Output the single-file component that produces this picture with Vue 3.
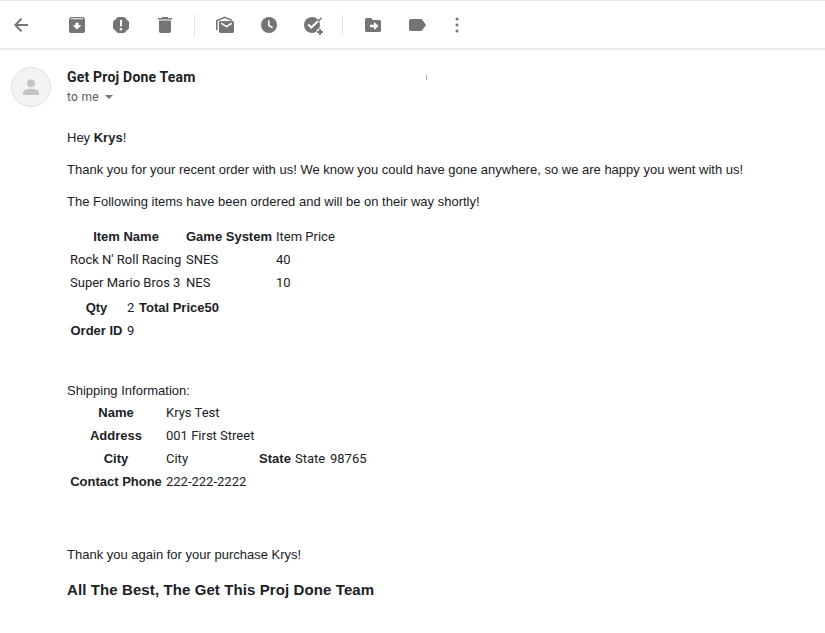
<script setup>
const items = [
  { name: "Rock N' Roll Racing", system: 'SNES', price: 40 },
  { name: 'Super Mario Bros 3', system: 'NES', price: 10 },
]
</script>

<template>
  <div class="mail">
    <header class="toolbar">
      <svg class="icon" viewBox="0 0 24 24"><path class="line" d="M19 12H6.500M12.400 5.800 6.400 12l6 6.200" /></svg>
      <div class="group first">
        <svg class="icon" viewBox="0 0 24 24"><path fill-rule="evenodd" d="M5.600 4h12.800L20 5.900V18.300a1.700 1.700 0 0 1-1.700 1.700H5.700A1.700 1.700 0 0 1 4 18.300V5.900ZM6 5.300v1h12v-1ZM10.400 9.700v2.600H7.600L12 16.400l4.400-4.100h-2.800V9.700Z" /></svg>
        <svg class="icon" viewBox="0 0 24 24"><path fill-rule="evenodd" d="M8.700 4h6.600L20 8.700v6.600L15.300 20H8.700L4 15.300V8.700ZM11 7v6.200h2V7ZM12 14.900a1.300 1.300 0 1 0 0 2.600 1.300 1.300 0 0 0 0-2.600Z" /></svg>
        <svg class="icon" viewBox="0 0 24 24"><path d="M9 4h6v1h4v1.600H5V5h4ZM6 7.600h12v10.700a1.700 1.700 0 0 1-1.700 1.700H7.700A1.700 1.700 0 0 1 6 18.300Z" /></svg>
      </div>
      <i class="divider"></i>
      <div class="group">
        <svg class="icon" viewBox="0 0 24 24"><rect x="6" y="8" width="15" height="12" rx="1.400" /><path class="white" d="M8.300 10.300 13.500 13.600 18.700 10.300" /><path class="thin" d="M3.800 17V7.700L11.500 4.300 18.800 7.200" /></svg>
        <svg class="icon" viewBox="0 0 24 24"><circle cx="12" cy="12" r="8" /><path class="white" d="M11.800 7.400v5l3.800 2.300" /></svg>
        <svg class="icon" viewBox="0 0 24 24"><circle cx="11" cy="12" r="8" /><path class="white wide" d="M7.300 11.500l3 3L21 4.200" /><path class="thin" d="M16.800 8.500 20.500 4.800" /><circle class="paper" cx="19" cy="19" r="3.600" /><path class="line" d="M19 16v6M16 19h6" /></svg>
      </div>
      <i class="divider"></i>
      <div class="group">
        <svg class="icon" viewBox="0 0 24 24"><path fill-rule="evenodd" d="M5.500 5h4.600l1.700 2h6.700A1.500 1.500 0 0 1 20 8.500v9a1.500 1.500 0 0 1-1.500 1.500h-13A1.500 1.500 0 0 1 4 17.500v-11A1.500 1.500 0 0 1 5.500 5ZM9 11.700v2.600h4v2.700l4.600-4L13 9v2.700Z" /></svg>
        <svg class="icon" viewBox="0 0 24 24"><path d="M5.700 6h10.200c.6 0 1.100.3 1.400.7L21 12l-3.700 5.300c-.3.400-.8.700-1.400.7H5.700A1.700 1.700 0 0 1 4 16.300V7.700A1.700 1.700 0 0 1 5.700 6Z" /></svg>
      </div>
      <svg class="icon more" viewBox="0 0 24 24"><circle cx="12" cy="6" r="1.500" /><circle cx="12" cy="12" r="1.500" /><circle cx="12" cy="18" r="1.500" /></svg>
    </header>

    <article class="message">
      <div class="avatar">
        <svg viewBox="0 0 40 40"><circle cx="20" cy="16.200" r="4" /><path d="M12 28v-2.200c0-2.600 5-4 8-4s8 1.400 8 4V28Z" /></svg>
      </div>
      <div class="content">
        <div class="sender"><span class="from">Get Proj Done Team</span><i class="tick"></i></div>
        <div class="to">to me <i class="caret"></i></div>

        <p class="greeting">Hey <b>Krys</b>!</p>
        <p class="thanks">Thank you for your recent order with us! We know you could have gone anywhere, so we are happy you went with us!</p>
        <p class="following">The Following items have been ordered and will be on their way shortly!</p>

        <div class="grid order">
          <b>Item Name</b><b>Game System</b><span>Item Price</span>
          <template v-for="item in items" :key="item.name">
            <span>{{ item.name }}</span><span>{{ item.system }}</span><span>{{ item.price }}</span>
          </template>
        </div>
        <div class="grid totals">
          <b>Qty</b><span>2</span><b>Total Price50</b>
          <b>Order ID</b><span>9</span>
        </div>

        <p class="shipping-title">Shipping Information:</p>
        <div class="grid shipping">
          <b>Name</b><span class="rest">Krys Test</span>
          <b>Address</b><span class="rest">001 First Street</span>
          <b>City</b><span>City</span><b>State</b><span>State</span><span>98765</span>
          <b>Contact Phone</b><span class="rest">222-222-2222</span>
        </div>

        <p class="again">Thank you again for your purchase Krys!</p>
        <h3>All The Best, The Get This Proj Done Team</h3>
      </div>
    </article>
  </div>
</template>

<style>
body {
  margin: 0;
  background: #fff;
}
</style>

<style scoped>
.mail {
  box-sizing: border-box;
  height: 633px;
  overflow: hidden;
  color: #202124;
  font: 13px/20px "Liberation Sans", Arial, sans-serif;
}
.toolbar {
  display: flex;
  align-items: center;
  box-sizing: border-box;
  height: 50px;
  padding-left: 9px;
  border-top: 1px solid #e6eaed;
  border-bottom: 2px solid #e7eaed;
}
.icon {
  flex: none;
  width: 24px;
  height: 24px;
  overflow: visible;
  fill: #757575;
}
.group {
  display: flex;
  gap: 20px;
}
.first {
  margin-left: 32px;
}
.more {
  margin-left: 16px;
}
.divider {
  width: 1px;
  height: 20px;
  margin: 0 18px 0 17px;
  background: #e4e4e4;
}
.line,
.thin,
.white {
  fill: none;
  stroke: #757575;
  stroke-width: 2;
}
.thin {
  stroke-width: 1.6;
}
.white {
  stroke: #fff;
  stroke-width: 1.6;
}
.wide {
  stroke-width: 2;
}
.paper {
  fill: #fff;
}
.message {
  display: flex;
  gap: 16px;
  padding: 17px 0 0 11px;
}
.avatar {
  box-sizing: border-box;
  flex: none;
  width: 40px;
  height: 40px;
  border: 1px solid #e0e0e0;
  border-radius: 50%;
  background: #f3f3f3;
}
.avatar svg {
  display: block;
  width: 40px;
  height: 40px;
  margin: -1px;
  fill: #c4c4c4;
}
.content {
  flex: 1;
  white-space: nowrap;
}
.sender {
  display: flex;
  align-items: center;
  height: 20px;
}
.from {
  width: 359px;
  font: bold 14px/20px Roboto, sans-serif;
  letter-spacing: 0.2px;
}
.tick {
  width: 1px;
  height: 5px;
  background: #aaa;
}
.to {
  display: flex;
  align-items: center;
  gap: 6px;
  height: 20px;
  color: #555a5f;
  font: 12px/20px Roboto, sans-serif;
  letter-spacing: 0.3px;
}
.caret {
  border: 4px solid transparent;
  border-top-color: #757575;
  border-bottom: 0;
}
p,
h3 {
  margin: 0;
}
.greeting {
  margin-top: 21px;
}
.thanks,
.following {
  margin-top: 12px;
}
.grid {
  display: grid;
  grid-auto-rows: 23px;
  column-gap: 4px;
  padding-left: 3px;
  line-height: 23px;
}
.grid span {
  font-family: Roboto, sans-serif;
}
.grid b {
  text-align: center;
}
.order {
  grid-template-columns: 112px 86px 70px;
  margin-top: 13px;
}
.totals {
  grid-template-columns: 53px 8px 90px;
  margin-top: 2px;
}
.totals b:nth-child(3) {
  text-align: left;
}
.shipping-title {
  margin-top: 39px;
}
.shipping {
  grid-template-columns: 92px 89px 32px 31px 50px;
}
.rest {
  grid-column: 2 / -1;
}
.again {
  margin-top: 52px;
}
h3 {
  margin-top: 15px;
  font-size: 15px;
  line-height: 20px;
  letter-spacing: 0.1px;
}
</style>
